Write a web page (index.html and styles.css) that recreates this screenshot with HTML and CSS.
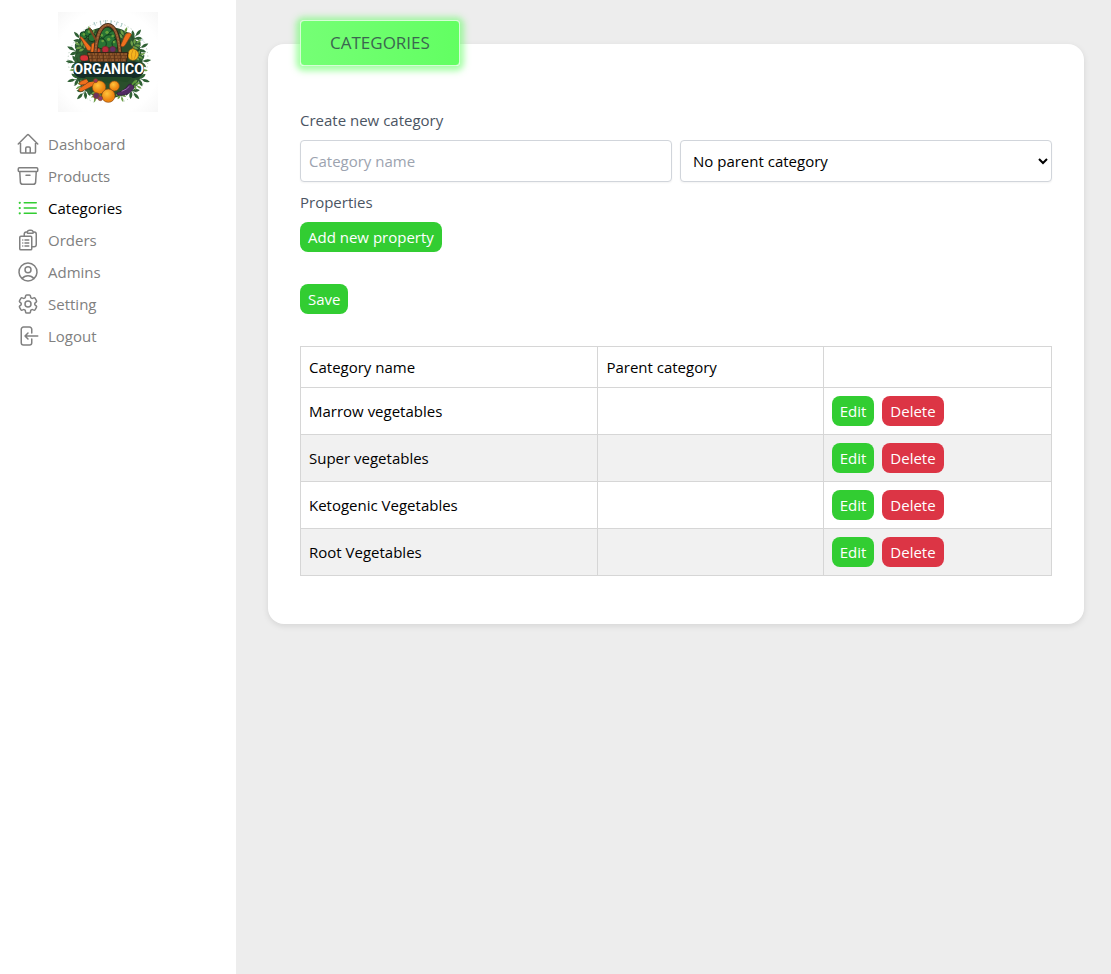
FILE: index.html
```html
<!DOCTYPE html>
<html lang="en">
<head>
<meta charset="utf-8">
<meta name="viewport" content="width=device-width, initial-scale=1">
<title>Organico – Categories</title>
<link rel="stylesheet" href="styles.css">
</head>
<body class="layout">
<aside class="sidebar">
  <a class="brand" href="#" aria-label="Organico">
    <svg class="logo" viewBox="24 21 300 300" role="img" aria-label="Organico logo">
      <defs>
        <radialGradient id="paper" r="0.7"><stop offset="0.75" stop-color="#fff"/><stop offset="1" stop-color="#f7f7f7"/></radialGradient>
        <radialGradient id="orange" cx="0.4" cy="0.35"><stop offset="0" stop-color="#ffc43c"/><stop offset="1" stop-color="#ee8510"/></radialGradient>
        <g id="sprig">
          <path d="M0 4C-3-10-1-24 0-36" stroke="#2c5a34" stroke-width="2" fill="none"/>
          <path d="M0-24Q-9-34 0-48Q9-34 0-24M-1-14Q-17-15-19-30Q-4-29-1-14M1-14Q17-15 19-30Q4-29 1-14M-1-2Q-17-1-22-14Q-6-17-1-2M1-2Q17-1 22-14Q6-17 1-2"/>
        </g>
      </defs>
      <rect x="24" y="21" width="300" height="300" fill="url(#paper)"/>
      <g fill="none" stroke="#a9c2b0" stroke-width="3" stroke-dasharray="3 8">
        <path d="M92 83Q170 14 252 78M72 112Q45 150 59 196M276 100Q303 144 289 196M72 240Q98 279 133 292M280 236Q248 281 218 290"/>
      </g>
      <g stroke="#6fa6a3" stroke-width="2"><path d="M132 51l4 11M151 47l2 14M167 45v16M184 47l-2 13M202 50l-4 11M217 55l-5 11M264 82l6 6M273 105h7"/></g>
      <path d="M86 104q12-24 38-26 18-12 50-12t54 14q24 4 31 30 17 20 18 58 6 40-16 68-18 28-48 36-40 16-77 1-33-9-48-40-20-30-14-66 2-40 12-63z" fill="#2a4f2b"/>
      <g fill="#2f6034">
        <use href="#sprig" transform="translate(104 116) rotate(-42)"/>
        <use href="#sprig" transform="translate(95 145) rotate(-65)"/>
        <use href="#sprig" transform="translate(95 174) rotate(-84)"/>
        <use href="#sprig" transform="translate(243 111) rotate(39)"/>
        <use href="#sprig" transform="translate(253 139) rotate(61)"/>
        <use href="#sprig" transform="translate(256 172) rotate(82)"/>
        <use href="#sprig" transform="translate(98 217) rotate(-105)"/>
        <use href="#sprig" transform="translate(253 218) rotate(105)"/>
        <use href="#sprig" transform="translate(114 248) rotate(-137)"/>
        <use href="#sprig" transform="translate(235 247) rotate(137)"/>
      </g>
      <g fill="#6d9f48">
        <use href="#sprig" transform="translate(126 100) rotate(-16) scale(.8)"/>
        <use href="#sprig" transform="translate(218 102) rotate(20) scale(.8)"/>
        <use href="#sprig" transform="translate(104 132) rotate(-54) scale(.75)"/>
        <use href="#sprig" transform="translate(246 126) rotate(50) scale(.75)"/>
        <use href="#sprig" transform="translate(254 155) rotate(72) scale(.7)"/>
        <use href="#sprig" transform="translate(92 193) rotate(-95) scale(.7)"/>
        <use href="#sprig" transform="translate(260 194) rotate(94) scale(.7)"/>
        <use href="#sprig" transform="translate(106 234) rotate(-122) scale(.7)"/>
        <use href="#sprig" transform="translate(246 234) rotate(120) scale(.7)"/>
        <use href="#sprig" transform="translate(141 260) rotate(-166) scale(.7)"/>
        <use href="#sprig" transform="translate(210 259) rotate(164) scale(.7)"/>
      </g>
      <g fill="#287434" stroke="#123c1d" stroke-width="3">
        <circle cx="101" cy="91" r="11"/><circle cx="116" cy="83" r="12"/><circle cx="126" cy="98" r="12"/>
        <circle cx="151" cy="96" r="15"/><circle cx="169" cy="85" r="19"/><circle cx="191" cy="94" r="17"/><circle cx="178" cy="109" r="20"/><circle cx="154" cy="116" r="15"/><circle cx="199" cy="116" r="13"/>
      </g>
      <g fill="#67a23d"><circle cx="102" cy="88" r="4"/><circle cx="117" cy="80" r="4"/><circle cx="155" cy="91" r="4"/><circle cx="171" cy="82" r="5"/><circle cx="188" cy="93" r="4"/><circle cx="176" cy="103" r="5"/><circle cx="158" cy="108" r="4"/><circle cx="192" cy="111" r="4"/></g>
      <g stroke="#823e19" stroke-width="2" fill="#f0701d">
        <path d="M89 95Q94 92 101 102L124 128Q123 140 112 135Z"/>
        <path d="M125 117q14-10 17 8l-2 17h-18zM239 84q-9-3-15 9l-13 30q9 7 16-5l15-25q5-6-3-9z"/>
        <path d="M87 251q-3 10 9 8l37-19q13-8 6-14-6-6-19 2z"/>
        <path d="M92 229q-9 8 0 11 15 2 26-12 2-6-7-7z"/>
      </g>
      <g stroke="#692a22" stroke-width="2">
        <ellipse cx="103" cy="159" rx="13" ry="9" fill="#d93137"/>
        <circle cx="166" cy="134" r="10" fill="#b92a3c"/><circle cx="188" cy="133" r="9" fill="#643168"/><circle cx="143" cy="137" r="8" fill="#d24d25"/>
      </g>
      <path d="M248 131q17 3 18 18-3 17-18 17-15-2-14-17 1-16 14-18z" fill="#f7b51d" stroke="#935714" stroke-width="2"/>
      <path d="M249 135q-8 12-3 27M257 137q2 13-4 24M248 133l4-10" fill="none" stroke="#c58018" stroke-width="2"/>
      <path d="M136 145C139 94 152 60 174 60S206 95 210 145" fill="none" stroke="#36200f" stroke-width="12"/>
      <path d="M136 145C139 94 152 60 174 60S206 95 210 145" fill="none" stroke="#8f5630" stroke-width="8"/>
      <path d="M136 145C139 94 152 60 174 60S206 95 210 145" fill="none" stroke="#bd8248" stroke-width="2" stroke-dasharray="4 5"/>
      <path d="M118 69l22 40" stroke="#7b4622" stroke-width="6"/>
      <path d="M112 143h122l-6 38H121z" fill="#70401e" stroke="#342113" stroke-width="3"/>
      <path d="M113 147h120M117 156h114M119 165h110" stroke="#b17038" stroke-width="3" stroke-dasharray="8 3"/>
      <path d="M126 145v34M143 145v34M160 145v34M177 145v34M194 145v34M211 145v34" stroke="#4c2914" stroke-width="2"/>
      <path d="M83 175Q101 164 120 170H234Q260 165 272 176L282 198Q277 217 253 219H98Q75 218 70 201Z" fill="#142c27"/>
      <path d="M105 216h142l-15 16-33-5-25 7-29-7-29 5z" fill="#244b26"/>
      <g stroke="#8b4a15" stroke-width="2">
        <circle cx="147" cy="247" r="20" fill="url(#orange)"/>
        <circle cx="193" cy="243" r="15" fill="url(#orange)"/>
        <circle cx="175" cy="272" r="20" fill="url(#orange)"/>
        <circle cx="139" cy="272" r="9" fill="#6b315e"/>
        <circle cx="151" cy="280" r="7" fill="#8c3c76"/>
        <circle cx="137" cy="227" r="6" fill="#9e3458"/>
      </g>
      <path d="M200 264q20-5 30-17 7-14 18-8 8 8-3 19-15 16-42 12z" fill="#512a62" stroke="#2b1835" stroke-width="2"/>
      <path d="M215 259q16-6 23-15" fill="none" stroke="#9a6baa" stroke-width="3"/>
      <path d="M246 239l10-10" stroke="#5c9a39" stroke-width="5"/>
      <text class="logo-text" x="176" y="207" text-anchor="middle">ORGANICO</text>
    </svg>
  </a>
  <nav class="nav" aria-label="Main">
    <a class="nav-link" href="#"><svg class="icon" viewBox="0 0 24 24" aria-hidden="true"><path d="m2.25 12 8.954-8.955c.44-.439 1.152-.439 1.591 0L21.75 12M4.5 9.75v10.125c0 .621.504 1.125 1.125 1.125H9.75v-4.875c0-.621.504-1.125 1.125-1.125h2.25c.621 0 1.125.504 1.125 1.125V21h4.125c.621 0 1.125-.504 1.125-1.125V9.75M8.25 21h8.25"/></svg>Dashboard</a>
    <a class="nav-link" href="#"><svg class="icon" viewBox="0 0 24 24" aria-hidden="true"><path d="m20.25 7.5-.625 10.632a2.25 2.25 0 0 1-2.247 2.118H6.622a2.25 2.25 0 0 1-2.247-2.118L3.75 7.5M10 11.25h4M3.375 7.5h17.25c.621 0 1.125-.504 1.125-1.125v-1.5c0-.621-.504-1.125-1.125-1.125H3.375c-.621 0-1.125.504-1.125 1.125v1.5c0 .621.504 1.125 1.125 1.125Z"/></svg>Products</a>
    <a class="nav-link active" href="#" aria-current="page"><svg class="icon" viewBox="0 0 24 24" aria-hidden="true"><path d="M8.25 6.75h12M8.25 12h12m-12 5.25h12M3.75 6.75h.007v.008H3.75V6.75Zm.375 0a.375.375 0 1 1-.75 0 .375.375 0 0 1 .75 0ZM3.75 12h.007v.008H3.75V12Zm.375 0a.375.375 0 1 1-.75 0 .375.375 0 0 1 .75 0Zm-.375 5.25h.007v.008H3.75v-.008Zm.375 0a.375.375 0 1 1-.75 0 .375.375 0 0 1 .75 0Z"/></svg>Categories</a>
    <a class="nav-link" href="#"><svg class="icon" viewBox="0 0 24 24" aria-hidden="true"><path d="M9 12h3.75M9 15h3.75M9 18h3.75m3 .75H18a2.25 2.25 0 0 0 2.25-2.25V6.108c0-1.135-.845-2.098-1.976-2.192a48.424 48.424 0 0 0-1.123-.08m-5.801 0c-.065.21-.1.433-.1.664 0 .414.336.75.75.75h4.5a.75.75 0 0 0 .75-.75 2.25 2.25 0 0 0-.1-.664m-5.8 0A2.251 2.251 0 0 1 13.5 2.25H15c1.012 0 1.867.668 2.15 1.586m-5.8 0c-.376.023-.75.05-1.124.08C9.095 4.01 8.25 4.973 8.25 6.108V8.25m0 0H4.875c-.621 0-1.125.504-1.125 1.125v11.25c0 .621.504 1.125 1.125 1.125h9.75c.621 0 1.125-.504 1.125-1.125V9.375c0-.621-.504-1.125-1.125-1.125H8.25ZM6.75 12h.008v.008H6.75V12Zm0 3h.008v.008H6.75V15Zm0 3h.008v.008H6.75V18Z"/></svg>Orders</a>
    <a class="nav-link" href="#"><svg class="icon" viewBox="0 0 24 24" aria-hidden="true"><path d="M17.982 18.725A7.488 7.488 0 0 0 12 15.75a7.488 7.488 0 0 0-5.982 2.975m11.963 0a9 9 0 1 0-11.963 0m11.963 0A8.966 8.966 0 0 1 12 21a8.966 8.966 0 0 1-5.982-2.275M15 9.75a3 3 0 1 1-6 0 3 3 0 0 1 6 0Z"/></svg>Admins</a>
    <a class="nav-link" href="#"><svg class="icon" viewBox="0 0 24 24" aria-hidden="true"><path d="M9.594 3.94c.09-.542.56-.94 1.11-.94h2.593c.55 0 1.02.398 1.11.94l.213 1.281c.063.374.313.686.645.87.074.04.147.083.22.127.325.196.72.257 1.075.124l1.217-.456a1.125 1.125 0 0 1 1.37.49l1.296 2.247a1.125 1.125 0 0 1-.26 1.431l-1.003.827c-.293.241-.438.613-.43.992a7.723 7.723 0 0 1 0 .255c-.008.378.137.75.43.991l1.004.827c.424.35.534.955.26 1.43l-1.298 2.247a1.125 1.125 0 0 1-1.369.491l-1.217-.456c-.355-.133-.75-.072-1.076.124a6.47 6.47 0 0 1-.22.128c-.331.183-.581.495-.644.869l-.213 1.281c-.09.543-.56.94-1.11.94h-2.594c-.55 0-1.019-.398-1.11-.94l-.213-1.281c-.062-.374-.312-.686-.644-.87a6.52 6.52 0 0 1-.22-.127c-.325-.196-.72-.257-1.076-.124l-1.217.456a1.125 1.125 0 0 1-1.369-.49l-1.297-2.247a1.125 1.125 0 0 1 .26-1.431l1.004-.827c.292-.24.437-.613.43-.991a6.932 6.932 0 0 1 0-.255c.007-.38-.138-.751-.43-.992l-1.004-.827a1.125 1.125 0 0 1-.26-1.43l1.297-2.247a1.125 1.125 0 0 1 1.37-.491l1.216.456c.356.133.751.072 1.076-.124.072-.044.146-.086.22-.128.332-.183.582-.495.644-.869l.214-1.28Z"/><path d="M15 12a3 3 0 1 1-6 0 3 3 0 0 1 6 0Z"/></svg>Setting</a>
    <a class="nav-link" href="#"><svg class="icon" viewBox="0 0 24 24" aria-hidden="true"><path d="M15.75 9V5.25A2.25 2.25 0 0 0 13.5 3h-6a2.25 2.25 0 0 0-2.25 2.25v13.5A2.25 2.25 0 0 0 7.5 21h6a2.25 2.25 0 0 0 2.25-2.25V15M12 9l-3 3m0 0 3 3m-3-3h12.75"/></svg>Logout</a>
  </nav>
</aside>
<main class="main">
  <section class="card">
    <h1 class="card-title">CATEGORIES</h1>
    <form class="form">
      <label class="label" for="name">Create new category</label>
      <div class="fields">
        <input class="field" id="name" type="text" placeholder="Category name">
        <select class="field select" aria-label="Parent category">
          <option>No parent category</option>
          <option>Marrow vegetables</option>
          <option>Super vegetables</option>
          <option>Ketogenic Vegetables</option>
          <option>Root Vegetables</option>
        </select>
      </div>
      <span class="label">Properties</span>
      <button class="btn" type="button">Add new property</button>
      <button class="btn save" type="submit">Save</button>
    </form>
    <table class="table">
      <colgroup><col class="col-name"><col class="col-parent"><col></colgroup>
      <thead><tr><th>Category name</th><th>Parent category</th><td></td></tr></thead>
      <tbody>
        <tr><td>Marrow vegetables</td><td></td><td><div class="actions"><button class="btn" type="button">Edit</button><button class="btn danger" type="button">Delete</button></div></td></tr>
        <tr><td>Super vegetables</td><td></td><td><div class="actions"><button class="btn" type="button">Edit</button><button class="btn danger" type="button">Delete</button></div></td></tr>
        <tr><td>Ketogenic Vegetables</td><td></td><td><div class="actions"><button class="btn" type="button">Edit</button><button class="btn danger" type="button">Delete</button></div></td></tr>
        <tr><td>Root Vegetables</td><td></td><td><div class="actions"><button class="btn" type="button">Edit</button><button class="btn danger" type="button">Delete</button></div></td></tr>
      </tbody>
    </table>
  </section>
</main>
</body>
</html>
```

FILE: styles.css
```css
* { box-sizing: border-box; }

.layout {
  display: flex;
  min-height: 100vh;
  margin: 0;
  background: #ededed;
  color: #000;
  font: 15px/24px "Segoe UI", "Open Sans", "Noto Sans", sans-serif;
}

.sidebar {
  flex: 0 0 236px;
  padding: 12px 20px 16px 16px;
  background: #fff;
}

.brand {
  display: block;
  width: 100px;
  margin: 0 0 20px 42px;
}

.logo { display: block; width: 100%; }

.logo-text {
  fill: #fff;
  stroke: #142c27;
  stroke-width: 3px;
  paint-order: stroke;
  font: 700 42px Roboto, sans-serif;
}

.nav {
  display: flex;
  flex-direction: column;
  gap: 8px;
}

.nav-link {
  display: flex;
  align-items: center;
  gap: 8px;
  color: #808080;
  text-decoration: none;
}

.nav-link.active { color: #000; }
.nav-link.active .icon { stroke: #32cd32; }

.icon {
  width: 24px;
  height: 24px;
  fill: none;
  stroke: currentColor;
  stroke-width: 1.5;
  stroke-linecap: round;
  stroke-linejoin: round;
}

.main {
  flex: 1;
  min-width: 0;
  padding: 44px 27px 32px 32px;
}

.card {
  position: relative;
  padding: 64px 32px 48px;
  border-radius: 16px;
  background: #fff;
  box-shadow: 0 2px 6px rgba(0, 0, 0, 0.1);
}

.card-title {
  position: absolute;
  top: -24px;
  left: 32px;
  margin: 0;
  padding: 10px 29px;
  border: 1px solid #d4ffd4;
  border-radius: 4px;
  background: linear-gradient(90deg, #75ff75, #62ff62);
  box-shadow: 0 1px 6px 4px rgba(80, 255, 80, 0.5);
  color: #3b6650;
  font-size: 17px;
  font-weight: 400;
}

.form {
  display: flex;
  flex-direction: column;
  align-items: flex-start;
  gap: 8px;
}

.label { color: #4b5563; }

.fields {
  display: grid;
  grid-template-columns: 1fr 1fr;
  gap: 8px;
  width: 100%;
}

.field {
  width: 100%;
  height: 42px;
  min-width: 0;
  padding: 8px;
  border: 1px solid #d1d5db;
  border-radius: 4px;
  background: #fff;
  box-shadow: 0 1px 2px rgba(0, 0, 0, 0.05);
  color: #000;
  font: inherit;
}

.field::placeholder { color: #9ca3af; }

.btn {
  padding: 3px 8px;
  border: 0;
  border-radius: 8px;
  background: #32cd32;
  color: #fff;
  font: inherit;
}

.save { margin-top: 24px; }
.danger { background: #dc3545; }

.table {
  width: 100%;
  margin-top: 32px;
  border-collapse: collapse;
  table-layout: fixed;
}

.col-name { width: 39.6%; }
.col-parent { width: 30%; }

.table th,
.table td {
  height: 41px;
  padding: 8px;
  border: 1px solid #d6d6d6;
  font-weight: 400;
  text-align: left;
}

.table tbody tr:nth-child(even) { background: #f1f1f1; }

.actions {
  display: flex;
  gap: 8px;
}
```
